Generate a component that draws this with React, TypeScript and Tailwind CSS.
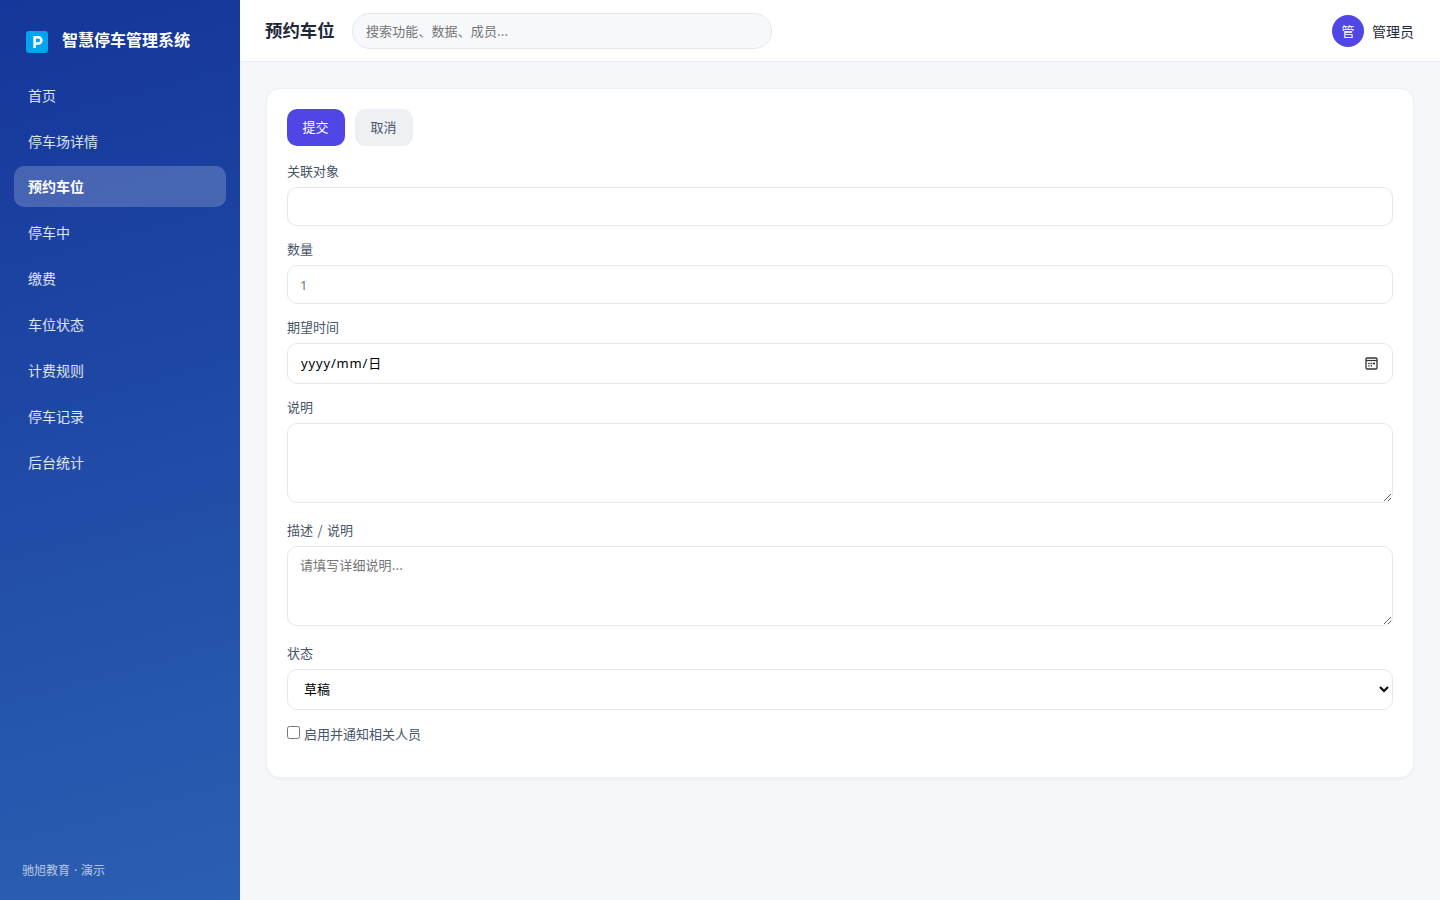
import React from 'react';

const navItems = ['首页', '停车场详情', '预约车位', '停车中', '缴费', '车位状态', '计费规则', '停车记录', '后台统计'];

const control =
  'block w-full rounded-[10px] border border-[#e5e7eb] bg-white px-3 text-[13px] text-black placeholder:text-[#757575] outline-none';

function Field({ label, children }: { label: string; children: React.ReactNode }) {
  return (
    <div className="flex flex-col">
      <div className="mb-[5px] h-5 text-[13px] leading-[18px] [word-spacing:1.5px] text-[#475569]">{label}</div>
      {children}
    </div>
  );
}

function CalendarIcon() {
  return (
    <svg width="13" height="13" viewBox="0 0 13 13" fill="none" className="shrink-0">
      <rect x="1" y="1" width="11" height="11" rx="1.2" stroke="#333" strokeWidth="1.3" />
      <path d="M1 3.5h11" stroke="#333" strokeWidth="1.2" />
      <path d="M5.5 6.5h1.3M7.7 6.5H9M3.3 6.5h1.3M9 6.5h1M3.3 8.9h1.3M5.7 8.9H7" stroke="#222" strokeWidth="1.3" />
    </svg>
  );
}

export default function App() {
  return (
    <div className="flex h-[900px] w-full overflow-hidden bg-[#f5f7fb] font-['Noto_Sans_CJK_SC',sans-serif] text-[#1e293b]">
      <aside className="flex w-60 shrink-0 flex-col bg-[linear-gradient(165deg,#15369a_0%,#2b5fb3_100%)] px-3.5">
        <div className="flex h-[73px] shrink-0 items-center gap-3.5 pt-2 pl-3">
          <svg width="22" height="22" viewBox="0 0 22 22" className="mt-[3px] shrink-0">
            <rect width="22" height="22" rx="3" fill="#00a4ef" />
            <path d="M8.6 17V6.2h3.7a3.15 3.15 0 0 1 0 6.3H8.6" fill="none" stroke="#fff" strokeWidth="2.5" />
          </svg>
          <span className="pb-[3px] text-base font-bold whitespace-nowrap text-white">智慧停车管理系统</span>
        </div>
        <nav className="flex flex-col gap-[4.9px] pt-[1.3px]">
          {navItems.map((item) => (
            <a
              key={item}
              className={
                item === '预约车位'
                  ? 'flex h-[41px] items-center rounded-[10px] bg-white/20 px-3.5 pb-0.5 text-sm font-bold text-white'
                  : 'flex h-[41px] items-center rounded-[10px] px-3.5 text-sm text-white/85'
              }
            >
              {item}
            </a>
          ))}
        </nav>
        <div className="mt-auto mb-5 pl-2 text-xs leading-[18px] text-white/65">
          驰旭教育<span className="font-['Noto_Sans',sans-serif] [word-spacing:0.8px]"> · </span>演示
        </div>
      </aside>

      <div className="flex min-w-0 flex-1 flex-col">
        <header className="flex h-[62px] shrink-0 items-center border-b border-[#eceef2] bg-white px-[26px]">
          <h1 className="-ml-px w-[87px] shrink-0 text-[17.4px] font-bold whitespace-nowrap">预约车位</h1>
          <input
            className="h-9 w-[420px] rounded-full border border-[#e5e7eb] bg-[#f7f8fc] px-[13px] pb-px text-[13px] tracking-[0.1px] outline-none placeholder:text-[#757575]"
            placeholder="搜索功能、数据、成员..."
          />
          <div className="ml-auto flex items-center gap-2">
            <div className="flex h-8 w-8 items-center justify-center rounded-full bg-[#4f46e5] text-[13px] text-white">管</div>
            <span className="text-sm">管理员</span>
          </div>
        </header>

        <main className="px-[26px] pt-[26px]">
          <section className="flex h-[690px] flex-col rounded-[14px] border border-[#eff1f5] bg-white px-5 pt-5 shadow-[0_1px_3px_rgba(15,23,42,0.04)]">
            <div className="mb-4 flex gap-2.5">
              <button className="h-[37px] w-[58px] rounded-[10px] bg-[#4f46e5] pr-px pb-px text-[13px] text-white">提交</button>
              <button className="h-[37px] w-[58px] rounded-[10px] bg-[#eef0f4] pr-px pb-px text-[13px] text-[#475569]">取消</button>
            </div>
            <div className="flex flex-col gap-3.5">
              <Field label="关联对象">
                <input className={`${control} h-[39px]`} />
              </Field>
              <Field label="数量">
                <input className={`${control} h-[39px] font-['Noto_Sans',sans-serif]`} placeholder="1" />
              </Field>
              <Field label="期望时间">
                <div className={`${control} h-[41px]`}>
                  <div className="flex h-full items-center justify-between pr-0.5">
                    <span className="pl-px font-['Noto_Sans',sans-serif] text-[13px] tracking-[0.85px]">
                      yyyy/mm/<span className="font-['Noto_Sans_CJK_SC',sans-serif]">日</span>
                    </span>
                    <CalendarIcon />
                  </div>
                </div>
              </Field>
              <Field label="说明">
                <textarea className={`${control} h-20 resize-y py-[9px]`} />
              </Field>
            </div>
            <div className="mt-[18px] flex flex-col gap-[18px]">
              <Field label="描述 / 说明">
                <textarea className={`${control} h-20 resize-y pt-2 pb-[9px] tracking-[0.1px]`} placeholder="请填写详细说明..." />
              </Field>
              <Field label="状态">
                <select className={`${control} h-[41px] pb-0.5`} defaultValue="草稿">
                  <option>草稿</option>
                </select>
              </Field>
            </div>
            <label className="mt-3.5 flex h-5 items-center text-[13px] text-[#475569]">
              <input type="checkbox" className="mr-1 -mt-[3px] h-[13px] w-[13px]" />
              <span className="-mt-px">启用并通知相关人员</span>
            </label>
          </section>
        </main>
      </div>
    </div>
  );
}
